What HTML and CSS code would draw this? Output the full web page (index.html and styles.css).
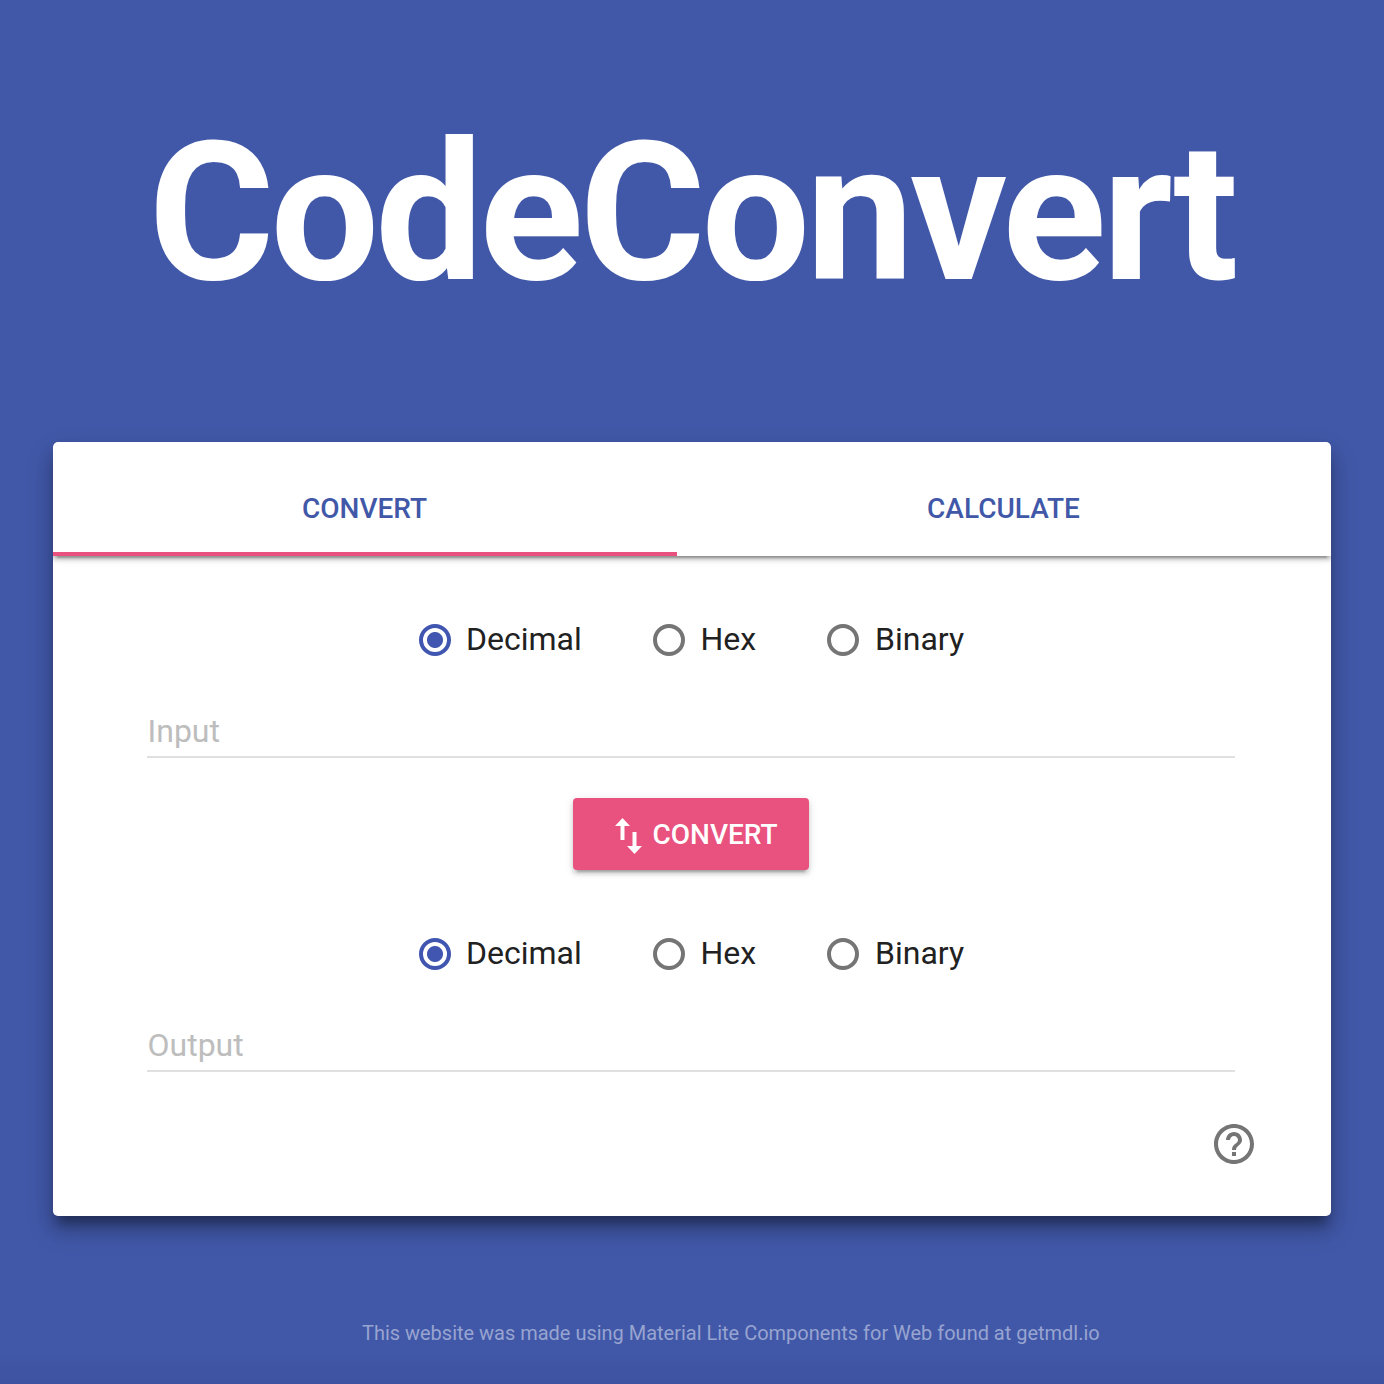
FILE: index.html
```html
<!DOCTYPE html>
<html lang="en">
<head>
<meta charset="utf-8">
<title>CodeConvert</title>
<link rel="stylesheet" href="styles.css">
</head>
<body>
<h1 class="title">CodeConvert</h1>
<main class="card">
  <nav class="tabs">
    <a class="tab tab-active">CONVERT</a>
    <a class="tab">CALCULATE</a>
  </nav>
  <div class="radios">
    <label class="radio radio-decimal"><span class="dot dot-on"></span><span class="radio-text">Decimal</span></label>
    <label class="radio radio-hex"><span class="dot"></span><span class="radio-text">Hex</span></label>
    <label class="radio radio-binary"><span class="dot"></span><span class="radio-text">Binary</span></label>
  </div>
  <div class="field">Input</div>
  <button class="convert">
    <svg class="swap" viewBox="0 0 28 36"><path d="M7.500 0 15 8H9.500v14h-4V8H0zM17.500 14h4v14H27l-7.500 8-7.500-8h5.500z"/></svg>
    <span>CONVERT</span>
  </button>
  <div class="radios">
    <label class="radio radio-decimal"><span class="dot dot-on"></span><span class="radio-text">Decimal</span></label>
    <label class="radio radio-hex"><span class="dot"></span><span class="radio-text">Hex</span></label>
    <label class="radio radio-binary"><span class="dot"></span><span class="radio-text">Binary</span></label>
  </div>
  <div class="field">Output</div>
  <svg class="help" viewBox="2 2 20 20"><path d="M11 18h2v-2h-2v2zm1-16C6.480 2 2 6.480 2 12s4.480 10 10 10 10-4.480 10-10S17.520 2 12 2zm0 18c-4.410 0-8-3.590-8-8s3.590-8 8-8 8 3.590 8 8-3.590 8-8 8zm0-14c-2.210 0-4 1.790-4 4h2c0-1.100.9-2 2-2s2 .9 2 2c0 2-3 1.750-3 5h2c0-2.250 3-2.500 3-5 0-2.210-1.790-4-4-4z"/></svg>
</main>
<footer class="footer">This website was made using Material Lite Components for Web found at getmdl.io</footer>
</body>
</html>
```
FILE: styles.css
```css
* { box-sizing: border-box; }
body {
  margin: 0;
  height: 1384px;
  overflow: hidden;
  background: linear-gradient(#4158a8 1350px, #3e53a0 1384px);
  font-family: Roboto, sans-serif;
  display: flex;
  flex-direction: column;
}
.title {
  margin: 0;
  height: 442px;
  padding: 93px 0 0 148.500px;
  font-size: 192.500px;
  line-height: 240px;
  font-weight: 700;
  letter-spacing: -4px;
  color: #fff;
  white-space: nowrap;
}
.card {
  width: 1278px;
  height: 774px;
  margin-left: 53px;
  background: #fff;
  border-radius: 5px;
  box-shadow: 0 12px 16px rgba(0,0,0,.24), 0 12px 28px 2px rgba(0,0,0,.14), 0 12px 8px -6px rgba(0,0,0,.2);
  display: flex;
  flex-direction: column;
}
.tabs {
  height: 114px;
  flex: none;
  display: flex;
  border-radius: 5px 5px 0 0;
  box-shadow: 0 4px 4px rgba(0,0,0,.14), 0 6px 2px -4px rgba(0,0,0,.2), 0 2px 10px rgba(0,0,0,.14), 0 1px 4px rgba(0,0,0,.14);
  clip-path: inset(0 0 -20px 0);
}
.tab {
  width: 654px;
  padding: 19px 1px 0 0;
  line-height: 96px;
  text-align: center;
  font-size: 28px;
  font-weight: 500;
  color: #4158a8;
}
.tab-active { width: 624px; border-bottom: 4px solid #e9517f; }
.radios {
  display: flex;
  height: 48px;
  flex: none;
  align-items: center;
  margin: 60px 0 0 366px;
}
.radio { display: flex; align-items: center; gap: 15px; font-size: 32px; color: #212121; }
.radio-decimal { width: 234px; }
.radio-hex { width: 174px; gap: 15.500px; }
.radio-binary { gap: 16px; }
.radio-text { line-height: 48px; padding-bottom: 2px; }
.dot {
  width: 32px;
  height: 32px;
  border: 4px solid #757575;
  border-radius: 50%;
}
.dot-on { border-color: #4056b0; background: radial-gradient(circle, #4056b0 7.5px, transparent 8.5px); }
.field {
  width: 1088px;
  height: 58px;
  flex: none;
  margin: 36px 0 0 94px;
  padding-left: 0.500px;
  border-bottom: 2px solid #e0e0e0;
  color: #bdbdbd;
  font-size: 32px;
  line-height: 62px;
}
.convert {
  width: 236px;
  height: 72px;
  flex: none;
  margin: 40px 0 0 520px;
  padding: 0 0 0 42px;
  display: flex;
  align-items: center;
  gap: 9.500px;
  border: 0;
  border-radius: 4px;
  background: #e9517f;
  box-shadow: 0 4px 4px rgba(0,0,0,.14), 0 6px 2px -4px rgba(0,0,0,.2), 0 2px 10px rgba(0,0,0,.12);
  color: #fff;
  font: 500 28px Roboto, sans-serif;
}
.swap { width: 28px; height: 36px; margin-top: 4px; fill: #fff; }
.help { width: 40px; height: 40px; flex: none; margin: 52px 0 0 1161px; fill: #757575; }
.footer {
  margin: 103px 0 0 362px;
  font-size: 19.980px;
  line-height: 28px;
  color: #98a4d0;
  white-space: nowrap;
}
```
